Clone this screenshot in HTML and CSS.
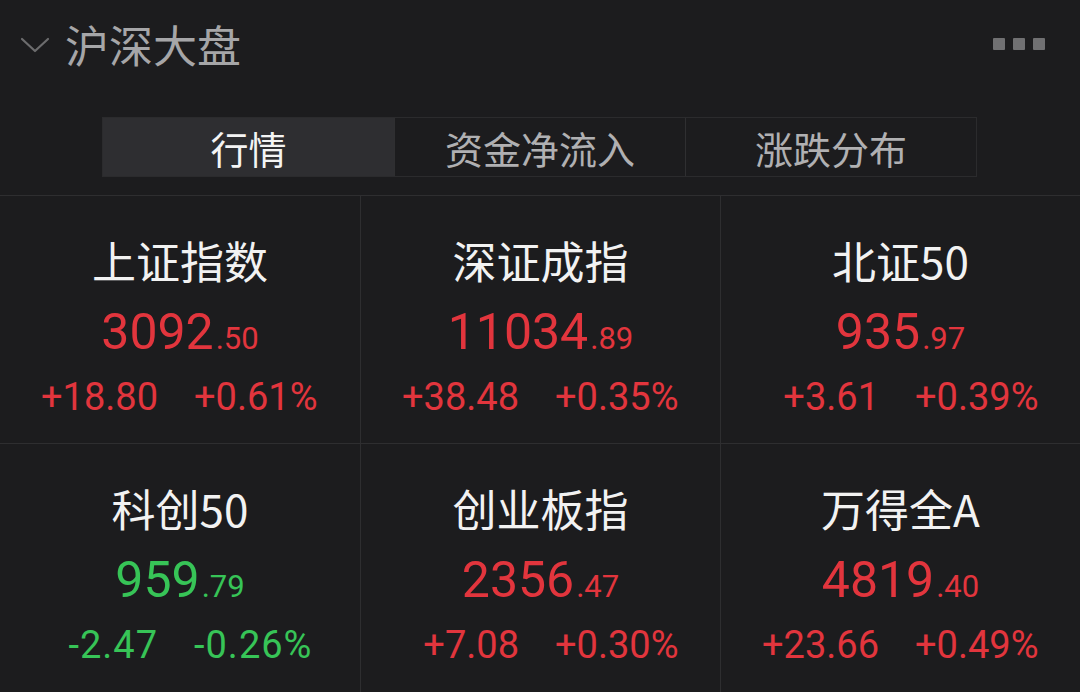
FILE: index.html
```html
<!DOCTYPE html>
<html lang="zh-CN">
<head>
<meta charset="utf-8">
<title>沪深大盘</title>
<link rel="stylesheet" href="styles.css">
</head>
<body>
<div class="panel">
  <div class="header">
    <svg class="chevron" width="30" height="18" viewBox="0 0 30 18"><path d="M2 3 L15 15 L28 3" fill="none" stroke="#6c6c6e" stroke-width="2.2" stroke-linecap="round" stroke-linejoin="round"/></svg>
    <div class="title">沪深大盘</div>
    <div class="more"><span></span><span></span><span></span></div>
  </div>
  <div class="tabs">
    <div class="tab active">行情</div>
    <div class="tab">资金净流入</div>
    <div class="tab">涨跌分布</div>
  </div>
  <div class="grid">
    <div class="cell">
      <div class="name">上证指数</div>
      <div class="price up">3092<span class="dec">.50</span></div>
      <div class="chg up"><span class="abs">+18.80</span><span class="pct">+0.61%</span></div>
    </div>
    <div class="cell">
      <div class="name">深证成指</div>
      <div class="price up">11034<span class="dec">.89</span></div>
      <div class="chg up"><span class="abs">+38.48</span><span class="pct">+0.35%</span></div>
    </div>
    <div class="cell">
      <div class="name">北证50</div>
      <div class="price up">935<span class="dec">.97</span></div>
      <div class="chg up"><span class="abs">+3.61</span><span class="pct">+0.39%</span></div>
    </div>
    <div class="cell">
      <div class="name">科创50</div>
      <div class="price down">959<span class="dec">.79</span></div>
      <div class="chg down"><span class="abs">-2.47</span><span class="pct">-0.26%</span></div>
    </div>
    <div class="cell">
      <div class="name">创业板指</div>
      <div class="price up">2356<span class="dec">.47</span></div>
      <div class="chg up"><span class="abs">+7.08</span><span class="pct">+0.30%</span></div>
    </div>
    <div class="cell">
      <div class="name">万得全A</div>
      <div class="price up">4819<span class="dec">.40</span></div>
      <div class="chg up"><span class="abs">+23.66</span><span class="pct">+0.49%</span></div>
    </div>
  </div>
</div>
</body>
</html>
```
FILE: styles.css
```css
html, body {
  margin: 0;
  padding: 0;
  background: #1c1c1e;
}
body {
  width: 1080px;
  height: 692px;
  overflow: hidden;
  font-family: "Noto Sans CJK SC", "Noto Sans", sans-serif;
}
.panel {
  display: flex;
  flex-direction: column;
}
.header {
  height: 92px;
  display: flex;
  align-items: center;
  padding: 0 35px 0 20px;
}
.chevron {
  margin-top: -2px;
  margin-right: 15px;
}
.title {
  font-size: 44px;
  line-height: 50px;
  margin-top: -4px;
  color: #a6a6a8;
  flex: 1;
}
.more {
  display: flex;
  gap: 8px;
  margin-top: -4px;
}
.more span {
  width: 12px;
  height: 12px;
  background: #707072;
  border-radius: 1px;
}
.tabs {
  margin: 25px 0 0 102px;
  width: 875px;
  height: 60px;
  display: grid;
  grid-template-columns: 1fr 1fr 1fr;
  border: 1px solid #2b2b2d;
  box-sizing: border-box;
}
.tab {
  display: flex;
  align-items: center;
  justify-content: center;
  font-size: 38px;
  color: #b0b0b2;
  border-left: 1px solid #2f2f31;
}
.tab:first-child {
  border-left: none;
}
.tab.active {
  background: #2e2e31;
  color: #f4f4f4;
}
.grid {
  margin-top: 18px;
  display: grid;
  grid-template-columns: 360px 359px 1fr;
  grid-template-rows: 247px 248px;
  gap: 1px;
  background: #2e2e30;
  border-top: 1px solid #2e2e30;
}
.cell {
  background: #1c1c1e;
  display: flex;
  flex-direction: column;
  align-items: center;
  padding-top: 36px;
  box-sizing: border-box;
}
.name {
  font-size: 44px;
  line-height: 56px;
  color: #f2f2f2;
}
.price {
  font-family: Roboto, "Noto Sans", sans-serif;
  font-size: 50px;
  line-height: 60px;
  margin-top: 14px;
}
.dec {
  font-size: 31px;
  margin-left: 2px;
}
.chg {
  font-family: Roboto, "Noto Sans", sans-serif;
  font-size: 38px;
  line-height: 46px;
  margin-top: 5px;
  align-self: stretch;
  display: grid;
  grid-template-columns: 158px 1fr;
  column-gap: 36px;
}
.abs {
  text-align: right;
}
.pct {
  text-align: left;
}
.down .abs, .down .pct {
  letter-spacing: 1px;
}
.up { color: #e2353d; }
.down { color: #37c457; }
```
